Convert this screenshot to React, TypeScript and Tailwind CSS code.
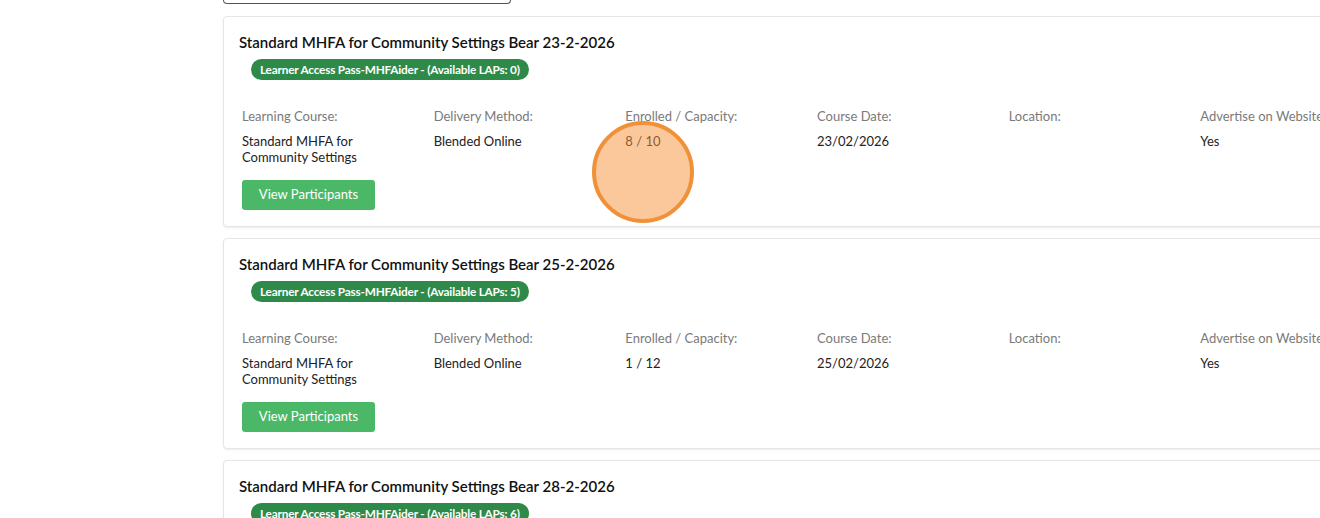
import React from "react";

const courses = [
  { date: "23-2-2026", laps: 0, enrolled: "8 / 10", courseDate: "23/02/2026" },
  { date: "25-2-2026", laps: 5, enrolled: "1 / 12", courseDate: "25/02/2026" },
  { date: "28-2-2026", laps: 6, enrolled: "3 / 12", courseDate: "28/02/2026" },
];

function Field({ label, children }: { label: string; children?: React.ReactNode }) {
  return (
    <div className="pr-3">
      <div className="text-[13px] leading-[18px] text-[#7a7a7a] whitespace-nowrap">{label}</div>
      <div className="mt-[8px] text-[13px] leading-[16px] text-[#222]">{children}</div>
    </div>
  );
}

function CourseCard({ date, laps, enrolled, courseDate }: typeof courses[number]) {
  return (
    <div className="w-[1160px] shrink-0 rounded-[4px] border border-[#e6e6e6] bg-white shadow-[0_1px_2px_rgba(0,0,0,0.08)] pt-[15px] pb-[16px]">
      <h3 className="pl-[15px] text-[15px] leading-[20px] font-semibold text-[#111]">
        Standard MHFA for Community Settings Bear {date}
      </h3>
      <div className="pl-[27px] mt-[7px] flex">
        <div className="flex items-center h-[21px] px-[9px] rounded-full bg-[#2e8a48] text-white text-[11.8px] font-bold tracking-[-0.2px] whitespace-nowrap">
          Learner Access Pass-MHFAider - (Available LAPs: {laps})
        </div>
      </div>
      <div className="pl-[18px] mt-[27px] grid grid-cols-[repeat(6,191.67px)]">
        <Field label="Learning Course:">
          Standard MHFA for
          <br />
          Community Settings
        </Field>
        <Field label="Delivery Method:">Blended Online</Field>
        <Field label="Enrolled / Capacity:">{enrolled}</Field>
        <Field label="Course Date:">{courseDate}</Field>
        <Field label="Location:" />
        <Field label="Advertise on Website:">Yes</Field>
      </div>
      <div className="pl-[18px] mt-[15px] flex">
        <button className="h-[30px] w-[133px] rounded-[3px] bg-[#4bb868] text-white text-[13px]">
          View Participants
        </button>
      </div>
    </div>
  );
}

export default function App() {
  return (
    <div
      className="relative w-[1320px] h-[518px] overflow-hidden bg-white"
      style={{ fontFamily: "Lato, 'Liberation Sans', sans-serif" }}
    >
      <div className="pl-[223px]">
        <div className="w-[288px] h-[4px] border border-t-0 border-[#555] rounded-b-[4px]" />
        <div className="mt-[12px] flex flex-col gap-[11px]">
          {courses.map(c => (
            <CourseCard key={c.date} {...c} />
          ))}
        </div>
      </div>
      {/* click marker */}
      <div className="absolute left-[592px] top-[121px] w-[102px] h-[102px] rounded-full border-[4px] border-[#f0913a] bg-[rgba(247,146,58,0.5)]" />
    </div>
  );
}
